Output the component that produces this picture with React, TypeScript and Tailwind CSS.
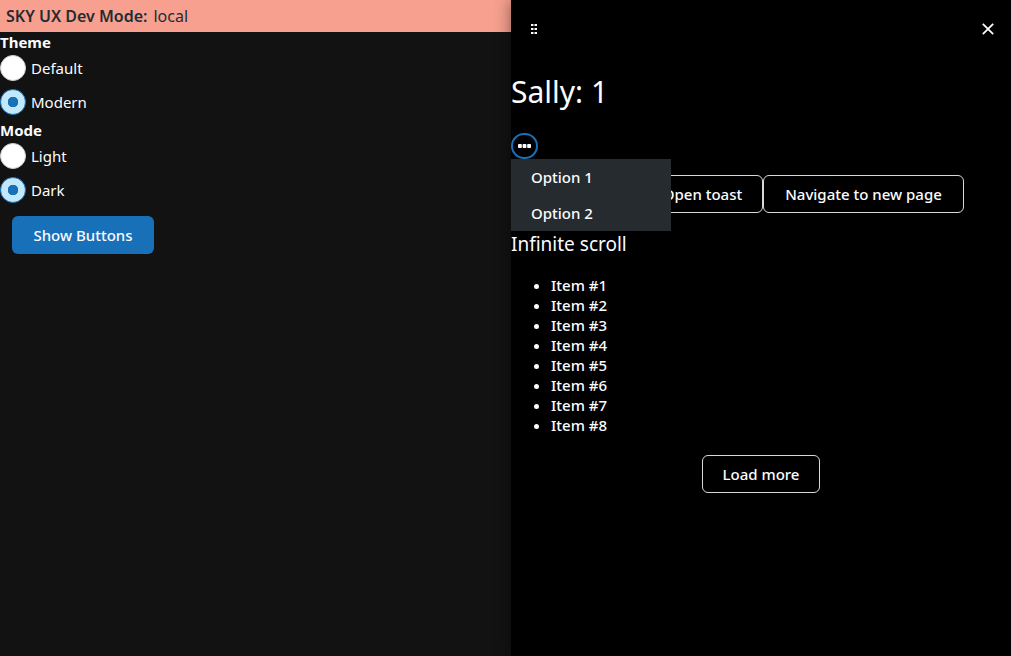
import { useState } from 'react';

const items = [1, 2, 3, 4, 5, 6, 7, 8];

type RadioGroupProps = {
  legend: string;
  name: string;
  options: string[];
  initial: string;
};

function RadioGroup({ legend, name, options, initial }: RadioGroupProps) {
  const [value, setValue] = useState(initial);
  return (
    <fieldset className="pb-[5px]">
      <legend className="mb-[3px] block text-[15px] leading-5 font-bold">{legend}</legend>
      <div className="flex flex-col gap-2">
        {options.map((option) => (
          <label key={option} className="flex h-[26px] items-center gap-[5px] text-[15px] leading-5">
            <input
              type="radio"
              name={name}
              checked={value === option}
              onChange={() => setValue(option)}
              className="size-[26px] shrink-0 appearance-none rounded-full border border-[#d2d2d2] bg-white checked:border-[#1870b8] checked:bg-[#c1e8fb] checked:bg-[radial-gradient(circle,#1870b8_5px,transparent_5.5px)]"
            />
            {option}
          </label>
        ))}
      </div>
    </fieldset>
  );
}

const outlineButton =
  'h-[38px] shrink-0 rounded-md border border-[#d8d8d8] text-center text-[15px] font-medium whitespace-nowrap';

export default function App() {
  return (
    <div className="flex min-h-screen bg-[#121212] font-['Noto_Sans',sans-serif] text-[#fbfcfe]">
      <main className="min-w-0 flex-1">
        <div className="flex h-8 items-center gap-1.5 bg-[#f7a08f] pl-1.5 text-base text-[#252b33]">
          <strong className="font-semibold">SKY UX Dev Mode:</strong>
          <span>local</span>
        </div>
        <RadioGroup legend="Theme" name="theme" options={['Default', 'Modern']} initial="Modern" />
        <RadioGroup legend="Mode" name="mode" options={['Light', 'Dark']} initial="Dark" />
        <button
          type="button"
          className="mt-2 ml-3 h-[38px] w-[142px] rounded-md bg-[#1870b8] text-[15px] font-medium"
        >
          Show Buttons
        </button>
      </main>

      <aside className="w-[500px] shrink-0 bg-black shadow-[0_0_15px_0_rgba(0,0,0,0.45)]">
        <header className="flex h-[58px] items-center justify-between px-[13px]">
          <button type="button" aria-label="Resize panel" className="grid size-5 place-items-center">
            <svg width="8" height="10" viewBox="0 0 8 10" fill="currentColor">
              <path d="M1 0h2.5v2H1zM4.5 0H7v2H4.5zM1 4h2.5v2H1zM4.5 4H7v2H4.5zM1 8h2.5v2H1zM4.5 8H7v2H4.5z" />
            </svg>
          </button>
          <button type="button" aria-label="Close" className="grid size-5 place-items-center">
            <svg width="12" height="12" viewBox="0 0 12 12" stroke="currentColor" strokeWidth="1.8">
              <path d="M.8.8l10.4 10.4M11.2.8L.8 11.2" />
            </svg>
          </button>
        </header>

        <h1 className="mt-3 text-[30px] leading-[44px] font-normal">Sally: 1</h1>

        <div className="relative mt-[19px] h-[26px]">
          <button
            type="button"
            aria-label="Context menu"
            aria-expanded="true"
            className="grid h-[26px] w-[27px] place-items-center rounded-full border-2 border-[#1870b8]"
          >
            <svg width="13" height="4" viewBox="0 0 13 4" fill="white">
              <rect x="0" width="3.8" height="4" rx=".8" />
              <rect x="4.6" width="3.8" height="4" rx=".8" />
              <rect x="9.2" width="3.8" height="4" rx=".8" />
            </svg>
          </button>
          <div role="menu" className="absolute top-full left-0 w-40 bg-[#262b2f] text-[15px] font-medium">
            <button type="button" role="menuitem" className="block h-9 w-full px-5 text-left">
              Option 1
            </button>
            <button type="button" role="menuitem" className="block h-9 w-full px-5 text-left">
              Option 2
            </button>
          </div>
        </div>

        <div className="mt-4 flex pl-[131px]">
          <button type="button" className={`${outlineButton} w-[121px]`}>
            Open toast
          </button>
          <button type="button" className={`${outlineButton} w-[201px]`}>
            Navigate to new page
          </button>
        </div>

        <h2 className="mt-[18px] text-[19px] leading-[26px]">Infinite scroll</h2>
        <ul className="mt-[18px] list-disc pl-10 text-[15px] leading-5 font-medium">
          {items.map((n) => (
            <li key={n}>Item #{n}</li>
          ))}
        </ul>
        <div className="mt-5 flex justify-center">
          <button type="button" className={`${outlineButton} w-[118px]`}>
            Load more
          </button>
        </div>
      </aside>
    </div>
  );
}
